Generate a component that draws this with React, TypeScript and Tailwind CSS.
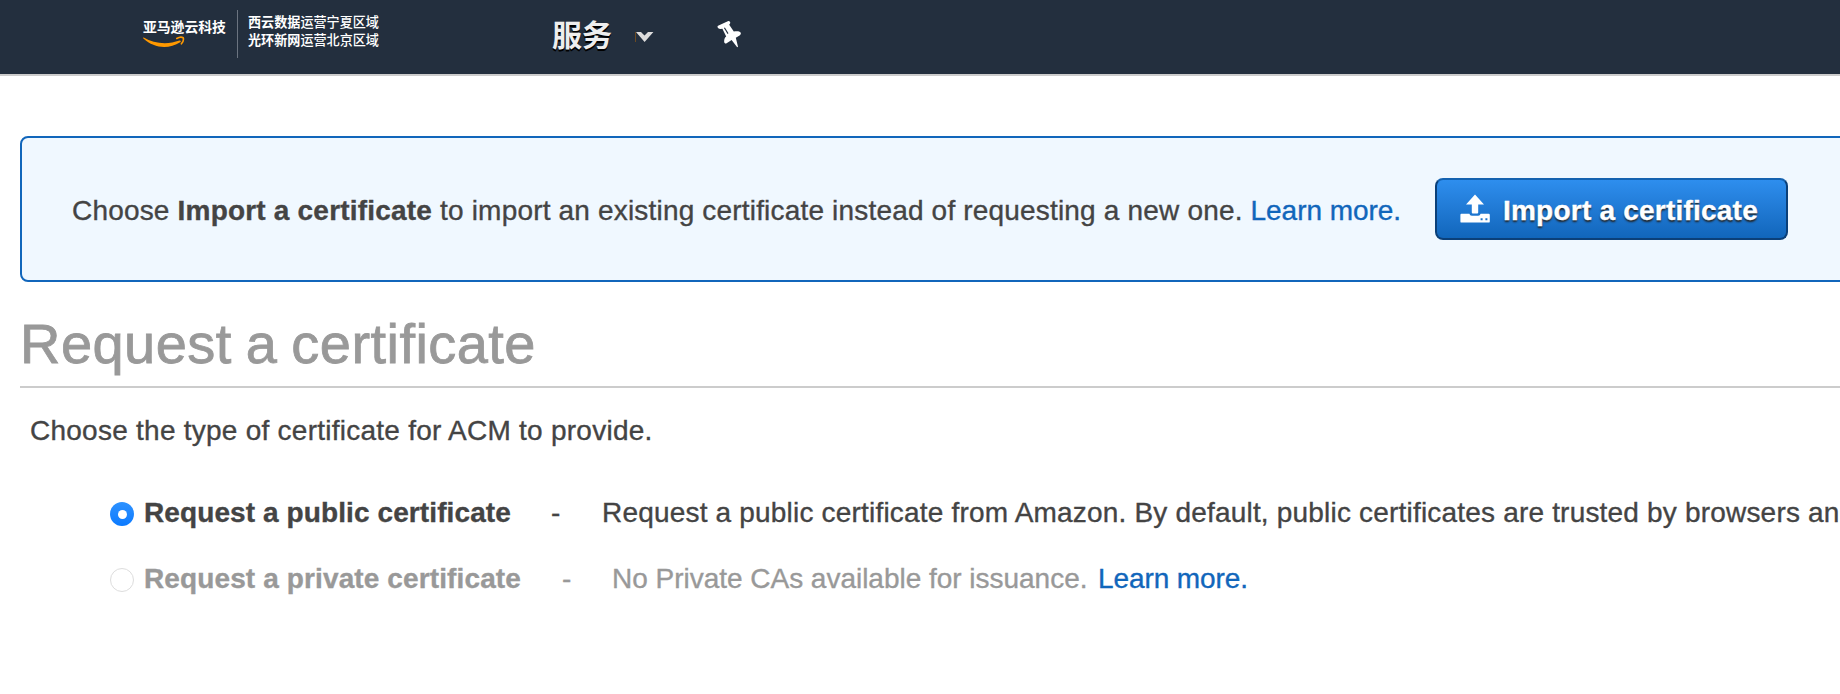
import React from "react";

function Smile() {
  return (
    <svg className="block" width="42" height="13" viewBox="0 0 42 13" fill="none">
      <path d="M0.7 1.6 C11 7.8 25 8.8 36.4 4.6 C37.8 4.2 38.3 5.4 37.2 6.2 C26 13.4 11.4 12.8 0.4 2.6 C-0.1 2 0.2 1.4 0.7 1.6 Z" fill="#f90" />
      <path d="M33.8 2.5 C36 1.1 39 1 40.2 1.7 C40.7 3 40.2 5.6 38.4 7.8" stroke="#f90" strokeWidth="1.6" strokeLinecap="round" />
    </svg>
  );
}

function Pin() {
  return (
    <svg className="block" width="26" height="30" viewBox="0 0 26 30" fill="#fff">
      <path d="M1 5.8 L10.8 1.2 C12.6 0.6 13.9 2.4 12.9 3.7 L12.2 4.7 L16.8 11.6 C19.8 10.8 22.6 11.2 23.6 12.6 C24.2 13.8 23.6 14.8 22.6 15.4 L18.8 17.8 L21 26.8 L20.2 27.2 L14.6 19.9 L9.6 23.2 C8.6 23.8 7.4 23.4 7.2 22 C7 19.6 7.6 17.4 9.2 16.4 L5.4 8.8 L3.4 9 C1.2 9 -0.4 7 1 5.8 Z" />
      <path d="M7.4 7.8 L11 13.6" stroke="#232f3e" strokeWidth="1.1" />
    </svg>
  );
}

function Upload() {
  return (
    <svg className="block shrink-0" width="30" height="30" viewBox="0 0 30 30">
      <path d="M15 0.6 L24 10.6 H18.2 V18.6 Q18.2 19.6 17.2 19.6 H12.8 Q11.8 19.6 11.8 18.6 V10.6 H6 Z" fill="#fff" />
      <path fillRule="evenodd" d="M1.4 19.8 H9.4 Q9.8 21.8 11.8 21.8 H18.2 Q20.2 21.8 20.6 19.8 H28.6 Q29.8 19.8 29.8 21 V27.4 Q29.8 28.6 28.6 28.6 H1.4 Q0.4 28.6 0.4 27.4 V21 Q0.4 19.8 1.4 19.8 Z M20.6 24.2 V26.2 H22.6 V24.2 Z M25.4 24.2 V26.2 H27.4 V24.2 Z" fill="#fff" />
    </svg>
  );
}

export default function App() {
  return (
    <div className="h-[694px] w-[1840px] overflow-hidden bg-white font-['Liberation_Sans','Noto_Sans_CJK_SC',sans-serif] text-[28px] leading-9 whitespace-nowrap text-[#444] [-webkit-text-stroke:0.35px_currentColor]">
      <header className="flex h-[76px] items-start border-b-2 border-[#ccc] bg-[#232f3e] pl-[143px] font-['Noto_Sans_CJK_SC',sans-serif] text-white [-webkit-text-stroke:0]">
        <div className="w-[94px] pt-[17px]">
          <div className="text-[13.8px] leading-[19px] font-bold">亚马逊云科技</div>
          <Smile />
        </div>
        <div className="mt-[10px] h-12 w-px bg-[#6b7480]" />
        <div className="ml-[10px] pt-[13px] text-[13.1px] leading-[18px] font-medium">
          <div><b>西云数据</b>运营宁夏区域</div>
          <div><b>光环新网</b>运营北京区域</div>
        </div>
        <div className="ml-[173px] pt-[12px] text-[30px] leading-[42px] font-bold text-[#eee] [text-shadow:0_2px_0_#000]">服务</div>
        <svg className="mt-[31px] ml-[23px] block" width="20" height="12" viewBox="0 0 20 12">
          <path d="M0.5 1 V11" stroke="#6b4a22" />
          <path d="M1 1 H6 L9.5 4.4 L13 1 H18.4 L9.6 11 Z" fill="#ddd" />
        </svg>
        <div className="mt-[20px] ml-[62px]"><Pin /></div>
      </header>

      <main className="pt-[60px] pl-5">
        <section className="flex h-[146px] w-[1900px] items-center rounded-lg border-2 border-[#16b] bg-[#f0f8ff] pl-[50px]">
          <p className="w-[1363px] shrink-0 pt-[3px] tracking-[0.18px]">
            Choose <b className="tracking-[0.2px]">Import a certificate</b> to import an existing certificate instead of requesting a new one. <a className="tracking-[-0.05px] text-[#16b]">Learn more.</a>
          </p>
          <button className="flex h-[62px] w-[353px] shrink-0 items-center rounded-lg border-2 border-[#0b4079] border-t-[#1462b0] bg-linear-to-b from-[#2e8eee] to-[#1166bb] pl-[23px] font-bold tracking-[0.22px] text-white [text-shadow:0_2px_2px_#222]">
            <Upload />
            <span className="ml-[13px] pt-[3px]">Import a certificate</span>
          </button>
        </section>

        <h1 className="mt-[28px] h-[78px] w-[1900px] border-b-2 border-[#ccc] text-[56px] leading-[68px] tracking-[0.45px] text-[#999] [-webkit-text-stroke:0.8px_#999] [word-spacing:-2px]">Request a certificate</h1>
        <p className="mt-[25px] pl-[10px] tracking-[0.25px]">Choose the type of certificate for ACM to provide.</p>

        <div className="mt-[46px] pl-[90px]">
          <label className="flex h-9 items-center">
            <span className="mt-[2px] flex size-6 shrink-0 items-center justify-center rounded-full bg-linear-to-b from-[#2d92ff] to-[#0a7aff]"><span className="size-[9px] rounded-full bg-white" /></span>
            <b className="ml-[10px] w-[407px] shrink-0 tracking-[0.1px]">Request a public certificate</b>
            <span className="w-[51px] shrink-0">-</span>
            <span className="shrink-0 tracking-[0.19px]">Request a public certificate from Amazon. By default, public certificates are trusted by browsers an</span>
          </label>
          <label className="mt-[30px] flex h-9 items-center text-[#999]">
            <span className="mt-[2px] size-6 shrink-0 rounded-full border border-[#ddd] bg-white" />
            <b className="ml-[10px] w-[418px] shrink-0 tracking-[0.12px]">Request a private certificate</b>
            <span className="w-[50px] shrink-0">-</span>
            <span className="w-[486px] shrink-0 tracking-[-0.02px]">No Private CAs available for issuance.</span>
            <a className="tracking-[-0.1px] text-[#16b]">Learn more.</a>
          </label>
        </div>
      </main>
    </div>
  );
}
